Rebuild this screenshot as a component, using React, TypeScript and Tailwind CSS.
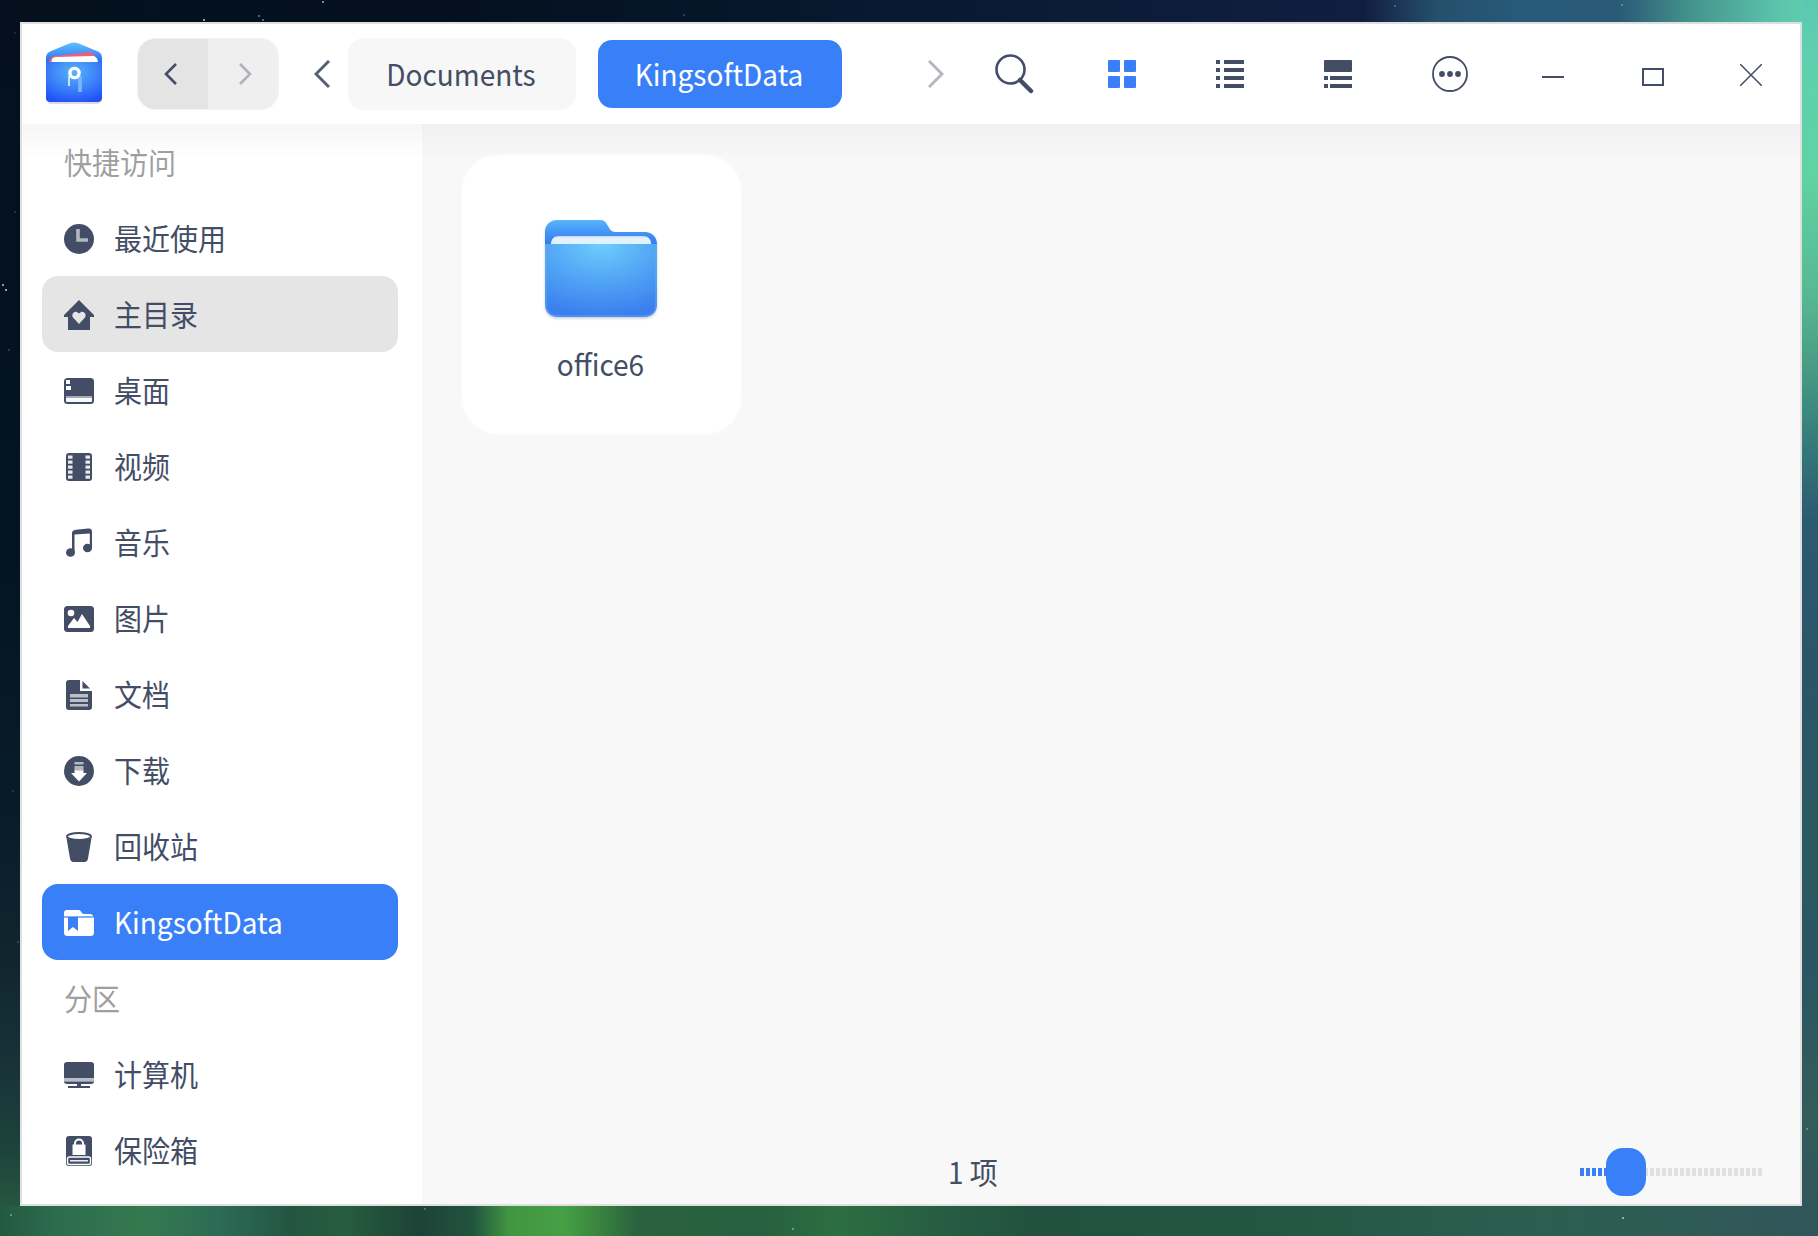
import React from 'react';

interface IconProps {
  className?: string;
}

const DARK = '#434d66';

const Icon: React.FC<{ children: React.ReactNode; className?: string }> = ({ children, className = '' }) => (
  <svg viewBox="0 0 30 30" width="30" height="30" fill="currentColor" className={`mt-0.5 shrink-0 ${className}`}>
    {children}
  </svg>
);

// labels are set a touch taller than their natural height
const Label: React.FC<{ children: React.ReactNode }> = ({ children }) => (
  <span className="inline-block -translate-y-px scale-y-[1.06]">{children}</span>
);

const ClockIcon = () => (
  <Icon>
    <circle cx="15" cy="15" r="15" />
    <path d="M14 5v11h10" fill="none" stroke="#b3b7c1" strokeWidth="3.6" />
  </Icon>
);

const HomeIcon = () => (
  <Icon>
    <path d="M15 0l15 15v2h-4v13H4V17H0v-2z" />
    <path d="M15 24l-6-6.500c-2-3 1-6.500 4-5.500l2 1.500 2-1.500c3-1 6 2.500 4 5.500z" fill="#e5e5e5" />
  </Icon>
);

const DesktopIcon = () => (
  <Icon>
    <rect x="0" y="2" width="30" height="26" rx="3.500" />
    <path d="M2 4h4v4H2zM2 10h5v4H2z" fill="#fff" />
    <path d="M2 20h26v5a1 1 0 0 1-1 1H3a1 1 0 0 1-1-1z" fill="#f7f8f9" />
    <path d="M2 20h26v2H2z" fill="#a4a9b5" />
  </Icon>
);

const VideoIcon = () => (
  <Icon>
    <rect x="2" y="1" width="26" height="28" rx="3" />
    {[4, 9, 14, 19, 24].map((y) => (
      <g key={y} fill="#e9eaee">
        <rect x="4" y={y - 0.5} width="4.500" height="3.200" />
        <rect x="21.500" y={y - 0.5} width="4.500" height="3.200" />
      </g>
    ))}
  </Icon>
);

const MusicIcon = () => (
  <Icon>
    <path d="M8 6c0-3 1-4 4-4.300l12-1.200c3-.2 4 .8 4 3.500v16h-2.200V5.500L10.500 6.500V25H8z" />
    <ellipse cx="6.500" cy="24.500" rx="4.500" ry="4.300" />
    <ellipse cx="23.500" cy="20" rx="4.500" ry="4.300" />
  </Icon>
);

const PictureIcon = () => (
  <Icon>
    <rect x="0" y="2" width="30" height="26" rx="3.500" />
    <circle cx="7" cy="9" r="3.300" fill="#fff" />
    <path d="M4 24v-2l6-8 3.500 4L18 10l8 12v2z" fill="#fff" />
  </Icon>
);

const DocumentIcon = () => (
  <Icon>
    <path d="M5 0h11v11h12v16a3 3 0 0 1-3 3H5a3 3 0 0 1-3-3V3a3 3 0 0 1 3-3z" />
    <path d="M18.500 1l7.500 7.500h-7.500z" />
    <path d="M6 14h18v3.500H6zM6 19h18v3H6zM6 24h18v2.500H6z" fill="#bcc0c9" />
  </Icon>
);

const DownloadIcon = () => (
  <Icon>
    <circle cx="15" cy="15" r="15" />
    <path d="M10.500 6h9v2.500h-9zM10.500 10h9v5h-9z" fill="#b4b8c2" />
    <path d="M10.500 14.500h9V17H23l-8 8.500L7 17h3.500z" fill="#fff" />
  </Icon>
);

const TrashIcon = () => (
  <Icon>
    <ellipse cx="15" cy="4.500" rx="12" ry="3.500" fill="#fff" stroke="currentColor" strokeWidth="2" />
    <path d="M2.500 6c3 3 22 3 25 0L24 26.500c-.4 2.300-1.500 3.500-3.500 3.500h-11c-2 0-3.100-1.200-3.500-3.500z" />
  </Icon>
);

const FolderMarkIcon = () => (
  <Icon>
    <path d="M0 5a3 3 0 0 1 3-3h12c2 0 2.500 4 5 4h6a3 3 0 0 1 3 3H0z" />
    <path d="M0 8h27a3 3 0 0 1 3 3v13.500a3.500 3.500 0 0 1-3.500 3.500h-23A3.500 3.500 0 0 1 0 24.500z" />
    <path d="M0 8h29v2H0z" fill="#7fb0fb" />
    <path d="M4 9h10v14l-5-4-5 4z" fill="#397ff8" />
  </Icon>
);

const ComputerIcon = () => (
  <Icon>
    <path d="M3 2h24a3 3 0 0 1 3 3v14H0V5a3 3 0 0 1 3-3z" />
    <path d="M0 18h30v3.500H0z" fill="#b9bdc7" />
    <path d="M0 21.500h30c0 1.500-1 2.500-3 2.500H17v2h9v2H4v-2h9v-2H3c-2 0-3-1-3-2.500z" />
  </Icon>
);

const VaultIcon = () => (
  <Icon>
    <rect x="2" y="0" width="26" height="30" rx="3" />
    <path d="M11 10V7.500a4 4 0 0 1 8 0V10" fill="none" stroke="#fff" strokeWidth="2" />
    <rect x="8.500" y="8.500" width="13" height="10.500" fill="#fff" />
    <rect x="3.500" y="21" width="23" height="7.500" rx="2" fill="none" stroke="#fff" strokeWidth="1.400" />
    <path d="M6 24.800h18" stroke="#fff" strokeWidth="1.400" />
  </Icon>
);

const Chevron: React.FC<{
  points: string;
  width: number;
  height: number;
  color: string;
  stroke?: number;
}> = ({ points, width, height, color, stroke = 2.6 }) => (
  <svg width={width} height={height} viewBox={`0 0 ${width} ${height}`} fill="none">
    <polyline points={points} stroke={color} strokeWidth={stroke} />
  </svg>
);

const AppLogo: React.FC<IconProps> = ({ className }) => (
  <svg width="56" height="62" viewBox="0 0 56 62" className={className}>
    <defs>
      <radialGradient id="logoFront" cx="50%" cy="25%" r="80%">
        <stop offset="0" stopColor="#58b4fb" />
        <stop offset="0.550" stopColor="#3a80f8" />
        <stop offset="1" stopColor="#1f50fa" />
      </radialGradient>
      <linearGradient id="logoBack" x1="0" y1="0" x2="0" y2="1">
        <stop offset="0" stopColor="#5cc3ff" />
        <stop offset="1" stopColor="#2a62ee" />
      </linearGradient>
    </defs>
    <path d="M2 58h52v2a2 2 0 0 1-2 2H4a2 2 0 0 1-2-2z" fill="#dcdcdc" />
    <path d="M0 22V16c0-3 1-5 4-6.500L22 2c4-2 8-2 12 0l18 7.500c3 1.500 4 3.500 4 6.500v6z" fill="url(#logoBack)" />
    <path d="M3 21c0-4 2-6.500 6-7L44 10c3 0 4 2 5 5v5z" fill="#e8627c" />
    <path d="M5.500 21c0-4 1.500-6 5-6l36-1c3 0 5.500 2.500 5.500 7z" fill="#fff" />
    <path d="M0 20h56v36a4 4 0 0 1-4 4H4a4 4 0 0 1-4-4z" fill="url(#logoFront)" />
    <path d="M23 34v10" stroke="#c9e4ff" strokeWidth="2" />
    <path d="M34 34v16" stroke="#7fb6fb" strokeWidth="3.600" />
    <circle cx="28.500" cy="31" r="4.600" fill="none" stroke="#fff" strokeWidth="3.400" />
  </svg>
);

const FolderIcon = () => (
  <svg width="120" height="104" viewBox="-4 0 120 104">
    <defs>
      <radialGradient id="folderFront" cx="50%" cy="0%" r="100%">
        <stop offset="0" stopColor="#6fcdfc" />
        <stop offset="0.500" stopColor="#52a5f5" />
        <stop offset="1" stopColor="#3a7eee" />
      </radialGradient>
      <linearGradient id="folderBack" x1="0" y1="0" x2="0" y2="1">
        <stop offset="0" stopColor="#56b5fb" />
        <stop offset="0.450" stopColor="#4497f7" />
        <stop offset="0.900" stopColor="#3b7bee" />
      </linearGradient>
      <linearGradient id="folderPaper" x1="0" y1="0" x2="0" y2="1">
        <stop offset="0" stopColor="#c3dcf8" />
        <stop offset="0.300" stopColor="#e6f1fc" />
        <stop offset="1" stopColor="#dcf4fe" />
      </linearGradient>
      <filter id="folderShadow" x="-10%" y="-10%" width="120%" height="125%">
        <feDropShadow dx="0" dy="1.500" stdDeviation="1" floodColor="#1d2c50" floodOpacity="0.250" />
      </filter>
    </defs>
    <g filter="url(#folderShadow)">
      <path d="M0 26V12C0 5 5 0 12 0h44c7 0 7 12 14 12h30c7 0 12 5 12 12v2z" fill="url(#folderBack)" />
      <path d="M0 24h112v60c0 8-5 13-13 13H13C5 97 0 92 0 84z" fill="url(#folderFront)" />
    </g>
    <path d="M6 24c0-5 3-8 8-8h84c5 0 8 3 8 8z" fill="url(#folderPaper)" />
    <path d="M1 26v58c0 7 4 12 12 12h86c8 0 12-5 12-12V26" fill="none" stroke="#6cb0f8" strokeOpacity="0.500" strokeWidth="1.600" />
  </svg>
);

interface SideItem {
  label: string;
  icon?: React.FC;
  state?: 'hover' | 'active';
}

const sideItems: SideItem[] = [
  { label: '快捷访问' },
  { label: '最近使用', icon: ClockIcon },
  { label: '主目录', icon: HomeIcon, state: 'hover' },
  { label: '桌面', icon: DesktopIcon },
  { label: '视频', icon: VideoIcon },
  { label: '音乐', icon: MusicIcon },
  { label: '图片', icon: PictureIcon },
  { label: '文档', icon: DocumentIcon },
  { label: '下载', icon: DownloadIcon },
  { label: '回收站', icon: TrashIcon },
  { label: 'KingsoftData', icon: FolderMarkIcon, state: 'active' },
  { label: '分区' },
  { label: '计算机', icon: ComputerIcon },
  { label: '保险箱', icon: VaultIcon },
];

const Sidebar: React.FC = () => (
  <nav className="w-[400px] shrink-0 bg-white px-5">
    {sideItems.map(({ label, icon: ItemIcon, state }) => {
      if (!ItemIcon) {
        return (
          <h2 key={label} className="flex h-[76px] items-center pl-[22px] text-[#9f9fa2]">
            <Label>{label}</Label>
          </h2>
        );
      }
      return (
        <a
          key={label}
          className={`flex h-[76px] w-[356px] items-center gap-5 rounded-2xl pl-[22px] ${
            state === 'active' ? 'bg-[#397ff8] text-white' : state === 'hover' ? 'bg-[#e5e5e5]' : ''
          }`}
        >
          <ItemIcon />
          <Label>{label}</Label>
        </a>
      );
    })}
  </nav>
);

const Header: React.FC = () => (
  <header className="flex h-[100px] items-center bg-white pl-6">
    <AppLogo className="-mt-0.5" />
    <div className="ml-[35px] flex h-[72px] w-[142px] overflow-hidden rounded-[18px] border border-[#f3f3f3]">
      <button className="flex w-[70px] items-center bg-[#e4e4e4] pl-[26px]">
        <Chevron points="12,1 2,11 12,21" width={14} height={22} color={DARK} />
      </button>
      <button className="flex w-[70px] items-center bg-[#efefef] pl-[30px]">
        <Chevron points="2,1 12,11 2,21" width={14} height={22} color="#b0b2bb" />
      </button>
    </div>
    <button className="ml-[35px]">
      <Chevron points="15,1 2,14 15,27" width={16} height={28} color="#555f76" stroke={3} />
    </button>
    <button className="ml-[18px] h-[72px] w-[228px] rounded-2xl bg-[#f7f7f7] pr-0.5">
      <Label>Documents</Label>
    </button>
    <button className="ml-[22px] h-[68px] w-[244px] rounded-[14px] bg-[#397ff8] pr-0.5 text-white">
      <Label>KingsoftData</Label>
    </button>
    <button className="ml-[86px]">
      <Chevron points="1,1 14,14 1,27" width={16} height={28} color="#b4b7bf" stroke={3} />
    </button>
    <button className="ml-[51px]">
      <svg width="40" height="40" viewBox="0 0 40 40" fill="none" stroke={DARK}>
        <circle cx="15.500" cy="15.500" r="14" strokeWidth="2.600" />
        <path d="M25 26l11 11" strokeWidth="4.500" strokeLinecap="round" />
      </svg>
    </button>
    <button className="ml-[73px] grid grid-cols-2 gap-1">
      <i className="size-3 rounded-[1px] bg-[#397ff8]" />
      <i className="size-3 rounded-[1px] bg-[#397ff8]" />
      <i className="size-3 rounded-[1px] bg-[#397ff8]" />
      <i className="size-3 rounded-[1px] bg-[#397ff8]" />
    </button>
    <button className="ml-20">
      <svg width="28" height="28" viewBox="0 0 28 28" fill={DARK}>
        <path d="M0 0h4v4H0zM8 0h20v4H8zM0 8h4v4H0zM8 8h20v4H8zM0 16h4v4H0zM8 16h20v4H8zM0 24h4v4H0zM8 24h20v4H8z" />
      </svg>
    </button>
    <button className="ml-20">
      <svg width="28" height="28" viewBox="0 0 28 28" fill={DARK}>
        <rect width="28" height="12" rx="1" />
        <path d="M0 16h4v4H0zM6 16h22v4H6zM0 24h4v4H0zM6 24h22v4H6z" />
      </svg>
    </button>
    <button className="ml-20">
      <svg width="36" height="36" viewBox="0 0 36 36" fill={DARK}>
        <circle cx="18" cy="18" r="17" fill="none" stroke={DARK} strokeWidth="1.800" />
        <circle cx="10" cy="18" r="2.900" />
        <circle cx="18" cy="18" r="2.900" />
        <circle cx="26" cy="18" r="2.900" />
      </svg>
    </button>
    <button className="mt-1.5 ml-[74px] h-0.5 w-[22px] bg-[#434d66]" />
    <button className="mt-1.5 ml-[78px] h-[18px] w-[22px] border-2 border-[#434d66]" />
    <button className="mt-0.5 ml-[76px]">
      <svg width="22" height="22" viewBox="0 0 22 22" stroke={DARK} strokeWidth="1.500">
        <path d="M0 0l22 22M22 0L0 22" />
      </svg>
    </button>
  </header>
);

const ZoomSlider: React.FC = () => (
  <div className="flex h-12 items-center">
    <div className="h-2 w-[26px] bg-[repeating-linear-gradient(90deg,#397ff8_0_4px,transparent_4px_6px)]" />
    <div className="h-12 w-10 rounded-[17px] bg-[#397ff8]" />
    <div className="h-2 w-[116px] bg-[repeating-linear-gradient(90deg,#e0e0e0_0_2px,transparent_2px_4px,#e0e0e0_4px_6px)]" />
  </div>
);

// stars of the desktop wallpaper: x, y, colour
const stars: [number, number, string][] = [
  [322, 1, '#5d8fae'],
  [203, 19, '#8ea3a6'],
  [258, 15, '#45638f'],
  [262, 19, '#45638f'],
  [683, 14, '#1d3f66'],
  [1394, 5, '#2f67a0'],
  [1621, 4, '#4292a6'],
  [14, 32, '#122a50'],
  [2, 284, '#8d99a6'],
  [5, 289, '#9aa5ad'],
  [8, 349, '#1f3b48'],
  [14, 211, '#16305c'],
  [12, 790, '#1c3a4c'],
  [17, 941, '#33464f'],
  [10, 1214, '#45a08a'],
  [424, 1208, '#3d7a70'],
  [792, 1228, '#4fa8a0'],
  [1622, 1217, '#85b5a8'],
  [1806, 1128, '#5b8a90'],
];

const App: React.FC = () => (
  <div className="relative h-[1236px] w-[1818px] overflow-hidden bg-[#04111d] pt-[22px] pl-5 font-['Noto_Sans_CJK_SC',sans-serif] text-[28px] leading-none text-[#434d66]">
    <div className="absolute inset-x-0 top-0 h-[22px] bg-[linear-gradient(90deg,#04111d_0%,#04101f_25%,#06172b_42%,#0c1b38_60%,#121e40_75%,#24506c_79%,#285a7a_84%,#2a5976_89%,#44938c_93%,#5cc6ad_98%,#5fd0ae_100%)]" />
    <div className="absolute top-0 left-0 h-full w-5 bg-[linear-gradient(180deg,#04101d_0%,#041422_45%,#081c28_65%,#10262f_78%,#183238_86%,#1d433c_93%,#27583f_98%,#286144_100%)]" />
    <div className="absolute top-0 right-0 h-full w-4 bg-[linear-gradient(180deg,#5cc8b2_0%,#5fd0ae_5%,#60d3a4_14%,#56b892_24%,#479a83_30%,#357a7a_36%,#2b5a70_42%,#2c5468_54%,#2a5a60_68%,#2b5562_78%,#335c5a_90%,#31555a_100%)]" />
    <div className="absolute inset-x-0 bottom-0 h-[30px] bg-[linear-gradient(90deg,#235840_0%,#2c6c4e_3%,#35794f_8%,#2c6b55_12%,#245543_16%,#265d3f_19%,#1d4237_23%,#21543f_26%,#429540_28%,#45a045_31%,#3d8a40_32.500%,#2a623e_35%,#27603f_42%,#2d6e41_46%,#265c43_52%,#22513f_57%,#235743_70%,#2c5f50_85%,#2f5a56_94%,#31555a_100%)]" />
    {stars.map(([x, y, color]) => (
      <i key={`${x}-${y}`} className="absolute size-[2px]" style={{ left: x, top: y, background: color }} />
    ))}
    <main className="relative flex h-[1184px] w-[1782px] flex-col border-2 border-[#dfdfdf] bg-[#f8f8f8]">
      <Header />
      <div className="relative flex min-h-0 flex-1">
        <Sidebar />
        <section className="flex flex-1 flex-col">
          <div className="flex-1 pt-[30px] pl-[39px]">
            <figure className="flex size-[281px] flex-col items-center rounded-[37px] border border-[#fbfbfb] bg-white pt-[65px] pr-0.5">
              <FolderIcon />
              <figcaption className="mt-[26px]">
                <Label>office6</Label>
              </figcaption>
            </figure>
          </div>
          <footer className="flex h-[64px] items-center pr-[38px]">
            <span className="flex-1 pl-[526px]">
              <Label>1 项</Label>
            </span>
            <ZoomSlider />
          </footer>
        </section>
        <div className="pointer-events-none absolute inset-x-0 top-0 h-9 bg-linear-to-b from-black/[0.035] to-transparent" />
      </div>
    </main>
  </div>
);

export default App;
